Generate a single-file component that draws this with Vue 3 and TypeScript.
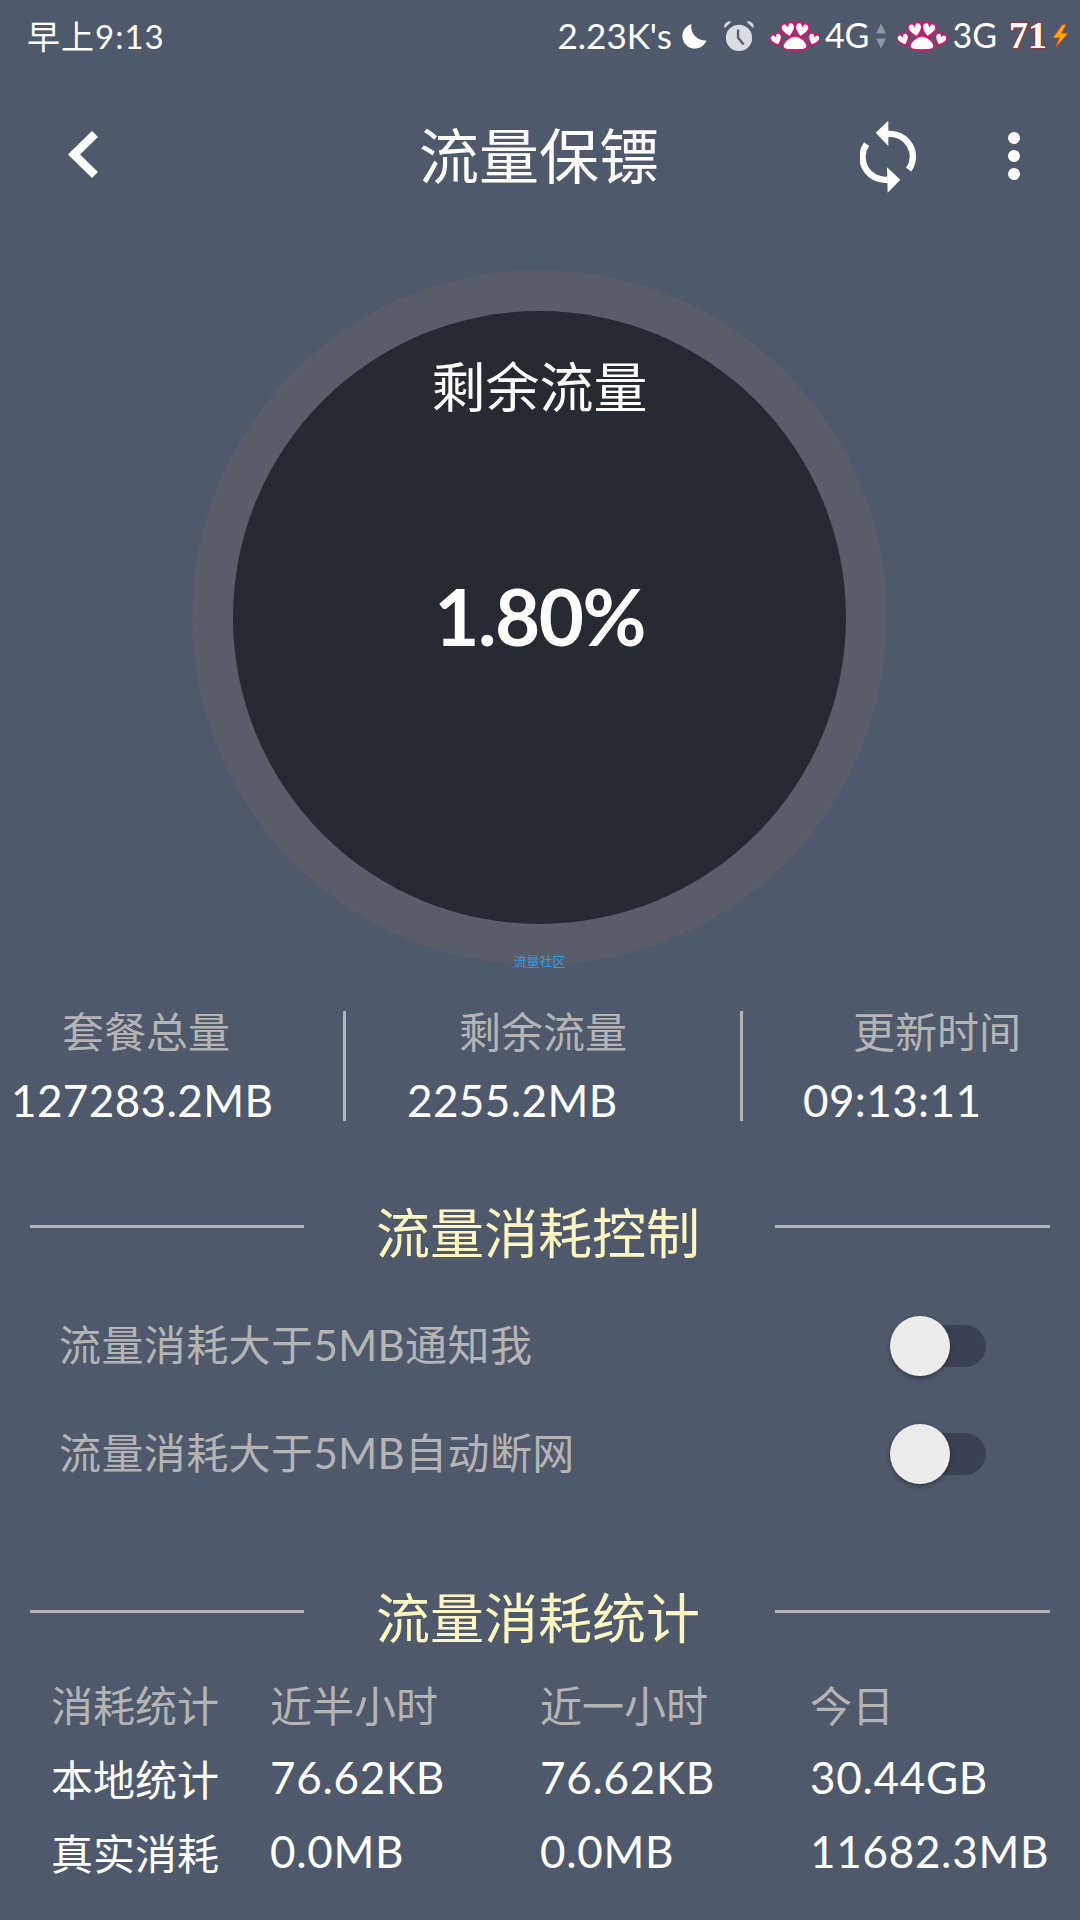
<script setup lang="ts">
const stats = [
  { label: '套餐总量', value: '127283.2MB', cls: 'c1' },
  { label: '剩余流量', value: '2255.2MB', cls: 'c2' },
  { label: '更新时间', value: '09:13:11', cls: 'c3' },
]
const toggles = ['流量消耗大于5MB通知我', '流量消耗大于5MB自动断网']
const table = [
  { cls: 'head', cells: ['消耗统计', '近半小时', '近一小时', '今日'] },
  { cls: 'body', cells: ['本地统计', '76.62KB', '76.62KB', '30.44GB'] },
  { cls: 'body', cells: ['真实消耗', '0.0MB', '0.0MB', '11682.3MB'] },
]
const heart = 'M0 -4 C-2 -9 -10 -8 -10 -1 C-10 5 -4 9 0 13 C4 9 10 5 10 -1 C10 -8 2 -9 0 -4 Z'
const toes = [
  'translate(6 16) rotate(-20) scale(.58)',
  'translate(18 6) rotate(-12) scale(.7)',
  'translate(32 6) rotate(12) scale(.7)',
  'translate(44 16) rotate(20) scale(.58)',
]
const pad = 'M25 14 C19 14 12 21 13 25 C14 29 21 27.500 25 28 C29 27.500 36 29 37 25 C38 21 31 14 25 14 Z'
</script>

<template>
  <div class="page">
    <div class="status">
      <span class="time">早上9:13</span>
      <div class="status-right">
        <span class="speed">2.23K's</span>
        <svg class="moon" width="26" height="26" viewBox="0 0 26 26"><path d="M10.500 1 A12.500 12.500 0 1 0 25.500 17.500 A14 14 0 0 1 10.500 1 Z" fill="#fff"/></svg>
        <svg class="alarm" width="30" height="30" viewBox="0 0 32 32">
          <circle cx="16" cy="18" r="14" fill="#d9dce1"/>
          <path d="M1 7 L7 1 C4 0 0 3 1 7 Z M31 7 L25 1 C28 0 32 3 31 7 Z" fill="#d9dce1" stroke="#d9dce1"/>
          <path d="M15 9 V18 L21 25" fill="none" stroke="#59606f" stroke-width="2.500"/>
        </svg>
        <svg class="paw" width="50" height="29" viewBox="0 0 50 29">
          <g fill="#fff" stroke="#f5056f">
            <path v-for="(t, i) in toes" :key="i" :d="heart" :transform="t" stroke-width="2.400"/>
            <path :d="pad" stroke-width="1.600"/>
          </g>
        </svg>
        <span class="net n4">4G</span>
        <svg class="arrows" width="10" height="30" viewBox="0 0 12 30"><path d="M6 0 L12 12 H0 Z M0 18 H12 L6 30 Z" fill="#8f96a3"/></svg>
        <svg class="paw p2" width="50" height="29" viewBox="0 0 50 29">
          <g fill="#fff" stroke="#f5056f">
            <path v-for="(t, i) in toes" :key="i" :d="heart" :transform="t" stroke-width="2.400"/>
            <path :d="pad" stroke-width="1.600"/>
          </g>
        </svg>
        <span class="net n3">3G</span>
        <span class="batt">71</span>
        <svg class="bolt" width="17" height="24" viewBox="0 0 18 24"><path d="M11 0 L1 14 H8 L4 24 L17 9 H10 L15 0 Z" fill="#ffab00" stroke="#e0401f" stroke-width=".8"/></svg>
      </div>
    </div>

    <div class="toolbar">
      <svg class="back" width="36" height="52" viewBox="0 0 36 52"><path d="M30 4 L9 24.500 L30 45" fill="none" stroke="#fff" stroke-width="8.500"/></svg>
      <div class="title">流量保镖</div>
      <svg class="refresh" width="57" height="75" viewBox="930 355 165 225">
        <path d="M1010 400 A68 68 0 0 1 1073 507 M1010 537 A68 68 0 0 1 947 430" fill="none" stroke="#fff" stroke-width="19"/>
        <path d="M1012 360 L974 396 L1012 436 Z M1008 500 L1048 537 L1010 576 Z" fill="#fff"/>
      </svg>
      <div class="dots"><i></i><i></i><i></i></div>
    </div>

    <div class="gauge">
      <div class="disc">
        <div class="disc-label">剩余流量</div>
        <div class="disc-value">1.80%</div>
      </div>
      <span class="mark">流量社区</span>
    </div>

    <div class="stats">
      <div v-for="s in stats" :key="s.label" class="stat" :class="s.cls">
        <div class="stat-label">{{ s.label }}</div>
        <div class="stat-value">{{ s.value }}</div>
      </div>
    </div>

    <div class="section first">
      <span class="rule"></span>
      <span class="section-title">流量消耗控制</span>
      <span class="rule"></span>
    </div>

    <div class="toggles">
      <div v-for="t in toggles" :key="t" class="toggle-row">
        <span class="toggle-text">{{ t }}</span>
        <div class="switch"><span class="knob"></span></div>
      </div>
    </div>

    <div class="section second">
      <span class="rule"></span>
      <span class="section-title">流量消耗统计</span>
      <span class="rule"></span>
    </div>

    <div class="table">
      <div v-for="(r, i) in table" :key="i" class="table-row" :class="r.cls">
        <span v-for="(c, j) in r.cells" :key="j">{{ c }}</span>
      </div>
    </div>
  </div>
</template>

<style scoped>
.page {
  width: 1080px;
  height: 1920px;
  overflow: hidden;
  background: #4f596c;
  color: #fff;
  font-family: Lato, "Noto Sans CJK SC", sans-serif;
}
.status {
  height: 72px;
  display: flex;
  align-items: center;
  justify-content: space-between;
  padding: 0 11px 0 27px;
  box-sizing: border-box;
  font-size: 33px;
}
.time { letter-spacing: 1px; padding-bottom: 3px; }
.status-right { display: flex; align-items: center; }
.speed { font-size: 35px; padding-bottom: 3px; }
.moon { margin-left: 9px; }
.alarm { margin-left: 17px; }
.paw { margin-left: 16px; }
.p2 { margin-left: 11px; }
.net { font-size: 34px; margin-left: 5px; padding-bottom: 3px; }
.arrows { margin-left: 7px; }
.batt {
  margin-left: 12px;
  padding-bottom: 3px;
  font-family: "Liberation Serif", serif;
  font-weight: 700;
  font-size: 38px;
  text-shadow: 0 0 2px #c0201c, 0 0 2px #c0201c, 0 0 1px #c0201c;
}
.bolt { margin-left: 5px; }
.toolbar {
  height: 168px;
  display: flex;
  align-items: center;
  position: relative;
  padding-left: 65px;
}
.title {
  position: absolute;
  left: 0;
  right: 2px;
  text-align: center;
  font-size: 60px;
  padding-bottom: 8px;
  pointer-events: none;
}
.refresh { margin-left: 759px; }
.dots {
  margin-left: 91px;
  display: flex;
  flex-direction: column;
  gap: 6px;
}
.dots i {
  display: block;
  width: 12px;
  height: 12px;
  border-radius: 50%;
  background: #fff;
}
.gauge {
  position: relative;
  margin: 30px 0 0 192px;
  width: 695px;
  height: 695px;
  border-radius: 50%;
  background: #585d69;
  display: flex;
  align-items: center;
  justify-content: center;
}
.disc {
  width: 613px;
  height: 613px;
  border-radius: 50%;
  background: #262a33;
  display: flex;
  flex-direction: column;
  align-items: center;
}
.disc-label {
  font-size: 54px;
  line-height: 70px;
  margin-top: 42px;
}
.disc-value {
  font-size: 78px;
  font-weight: 700;
  letter-spacing: -1.500px;
  line-height: 100px;
  margin-top: 143px;
}
.mark {
  position: absolute;
  left: 0;
  right: 0;
  bottom: -4px;
  text-align: center;
  font-size: 13px;
  line-height: 16px;
  color: #2f9be8;
}
.stats {
  margin-top: 46px;
  height: 110px;
  display: grid;
  grid-template-columns: 346px 397px 337px;
}
.stat {
  box-sizing: border-box;
  border-right: 3px solid #b4b4b4;
}
.stat:last-child { border-right: 0; }
.stat-label {
  font-size: 42px;
  line-height: 42px;
  color: #b4b4b4;
  white-space: nowrap;
}
.stat-value {
  font-size: 44px;
  letter-spacing: .4px;
  line-height: 42px;
  margin-top: 26px;
  white-space: nowrap;
}
.c1 .stat-label { padding-left: 62px; }
.c1 .stat-value { padding-left: 11px; }
.c2 .stat-label { padding-left: 113px; }
.c2 .stat-value { padding-left: 61px; }
.c3 .stat-label { padding-left: 110px; }
.c3 .stat-value { padding-left: 60px; }
.section {
  display: grid;
  grid-template-columns: 274px 471px 275px;
  padding-left: 30px;
  height: 68px;
}
.first { margin-top: 79px; }
.second { margin-top: 77px; }
.rule {
  height: 3px;
  margin-top: 25px;
  background: #b4b4b4;
}
.section-title {
  text-align: center;
  font-size: 54px;
  line-height: 68px;
  padding-right: 3px;
  color: #fdf6c3;
}
.toggles { margin-top: 24px; }
.toggle-row {
  height: 108px;
  display: flex;
  align-items: center;
  justify-content: space-between;
  padding: 0 94px 0 59px;
  font-size: 42px;
  color: #b4b4b4;
}
.toggle-text {
  letter-spacing: .4px;
  padding-bottom: 7px;
}
.switch {
  position: relative;
  width: 86px;
  height: 42px;
  border-radius: 21px;
  background: #3a4153;
}
.knob {
  position: absolute;
  left: -10px;
  top: -9px;
  width: 60px;
  height: 60px;
  border-radius: 50%;
  background: #ececec;
  box-shadow: 0 2px 4px rgba(0, 0, 0, .35);
}
.table { margin-top: 13px; padding-left: 51px; }
.table-row {
  height: 74px;
  display: grid;
  grid-template-columns: 219px 270px 270px auto;
  align-items: center;
  white-space: nowrap;
  font-size: 42px;
}
.table-row.body span:not(:first-child) {
  font-size: 44px;
  letter-spacing: .7px;
}
.head { color: #b4b4b4; }
</style>
